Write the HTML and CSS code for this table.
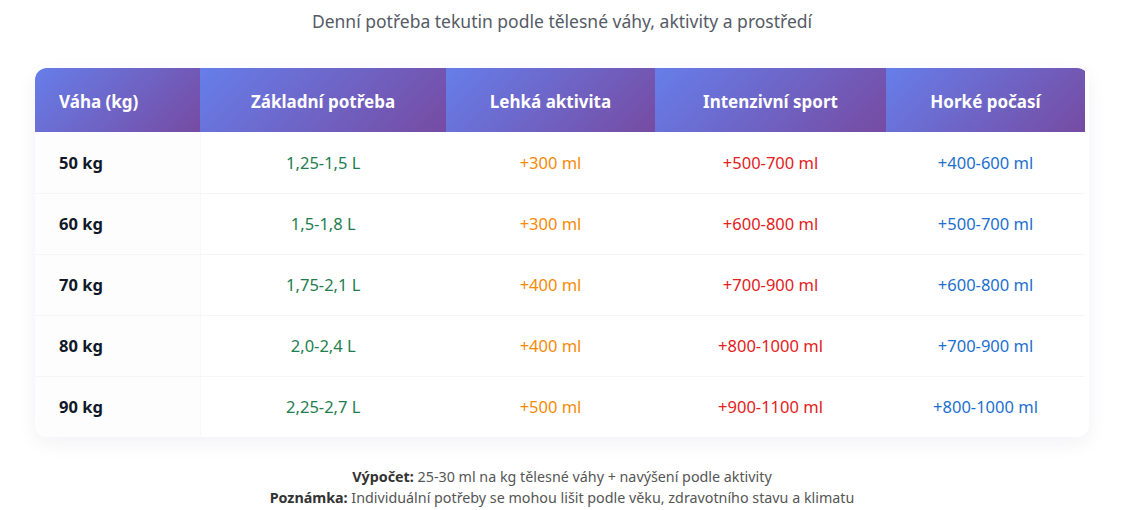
FILE: index.html
```html
<!DOCTYPE html>
<html lang="cs">
<head>
<meta charset="utf-8">
<title>Denní potřeba tekutin</title>
<link rel="stylesheet" href="styles.css">
</head>
<body>
<div class="page">
  <p class="subtitle">Denní potřeba tekutin podle tělesné váhy, aktivity a prostředí</p>
  <div class="table-wrap">
    <table class="fluid">
      <colgroup>
        <col class="c1"><col class="c2"><col class="c3"><col class="c4"><col class="c5">
      </colgroup>
      <thead>
        <tr>
          <th class="first">Váha (kg)</th>
          <th>Základní potřeba</th>
          <th>Lehká aktivita</th>
          <th>Intenzivní sport</th>
          <th>Horké počasí</th>
        </tr>
      </thead>
      <tbody>
        <tr><td class="first">50 kg</td><td class="base">1,25-1,5 L</td><td class="light">+300 ml</td><td class="sport">+500-700 ml</td><td class="hot">+400-600 ml</td></tr>
        <tr><td class="first">60 kg</td><td class="base">1,5-1,8 L</td><td class="light">+300 ml</td><td class="sport">+600-800 ml</td><td class="hot">+500-700 ml</td></tr>
        <tr><td class="first">70 kg</td><td class="base">1,75-2,1 L</td><td class="light">+400 ml</td><td class="sport">+700-900 ml</td><td class="hot">+600-800 ml</td></tr>
        <tr><td class="first">80 kg</td><td class="base">2,0-2,4 L</td><td class="light">+400 ml</td><td class="sport">+800-1000 ml</td><td class="hot">+700-900 ml</td></tr>
        <tr><td class="first">90 kg</td><td class="base">2,25-2,7 L</td><td class="light">+500 ml</td><td class="sport">+900-1100 ml</td><td class="hot">+800-1000 ml</td></tr>
      </tbody>
    </table>
  </div>
  <div class="notes">
    <p><strong>Výpočet:</strong> 25-30 ml na kg tělesné váhy + navýšení podle aktivity</p>
    <p><strong>Poznámka:</strong> Individuální potřeby se mohou lišit podle věku, zdravotního stavu a klimatu</p>
  </div>
</div>
</body>
</html>
```
FILE: styles.css
```css
* { box-sizing: border-box; }
html, body { margin: 0; padding: 0; background: #ffffff; }
body {
  font-family: "Noto Sans", "Open Sans", "DejaVu Sans", sans-serif;
  color: #333;
}
.page {
  width: 1124px;
  padding: 8px 35px 0 35px;
}
.subtitle {
  margin: 0;
  text-align: center;
  font-size: 17.5px;
  line-height: 26px;
  color: #555b66;
}
.table-wrap {
  margin-top: 34px;
  border-radius: 12px;
  overflow: hidden;
  box-shadow: 0 6px 20px rgba(30, 40, 80, 0.06);
  background: #fff;
}
.fluid {
  width: 1050px;
  border-collapse: collapse;
  table-layout: fixed;
}
.c1 { width: 165px; }
.c2 { width: 246px; }
.c3 { width: 209px; }
.c4 { width: 231px; }
.c5 { width: 199px; }
.fluid th {
  height: 64px;
  padding: 2px 16px 0;
  background: linear-gradient(135deg, #667eea 0%, #764ba2 100%);
  color: #fff;
  font-weight: 700;
  font-size: 17px;
  text-align: center;
}
.fluid th.first { text-align: left; padding-left: 24px; }
.fluid td {
  height: 61px;
  padding: 0 16px 0;
  font-size: 16.5px;
  text-align: center;
  border-bottom: 1px solid #f4f5f7;
}
.fluid tbody tr:last-child td { border-bottom: none; }
.fluid td.first {
  text-align: left;
  padding-left: 24px;
  font-weight: 700;
  color: #111827;
  background: #fdfdfe;
  border-right: 1px solid #f7f8f9;
}
.base { color: #1e7d4f; }
.light { color: #f58a07; }
.sport { color: #e3201b; }
.hot { color: #1c6fce; }
.notes {
  margin-top: 29px;
  text-align: center;
  font-size: 14.3px;
  line-height: 21px;
  color: #555;
}
.notes p { margin: 0; }
.notes strong { color: #333; font-weight: 700; }
```
